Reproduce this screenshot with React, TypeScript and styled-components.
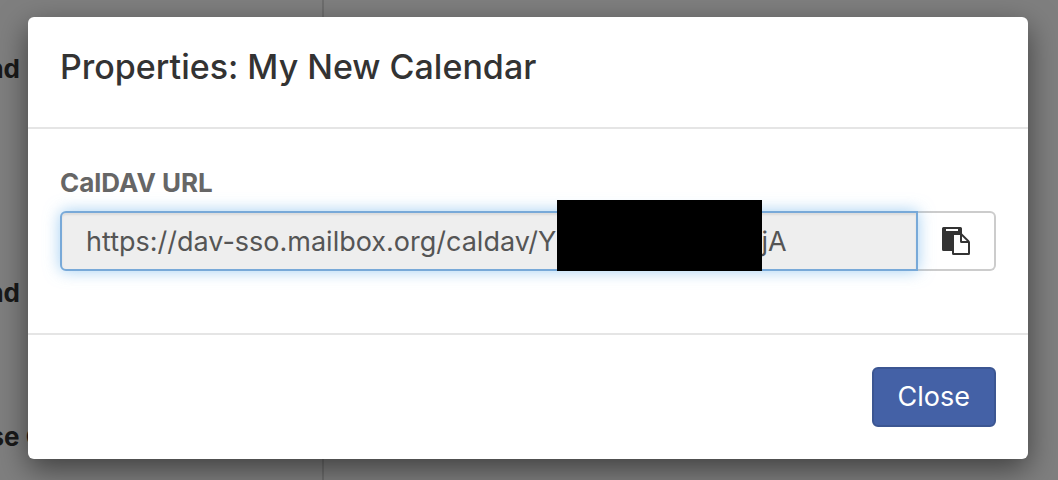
import React from "react";
import styled, { createGlobalStyle } from "styled-components";

const GlobalStyle = createGlobalStyle`
  *, *::before, *::after { box-sizing: border-box; }
  body {
    margin: 0;
    background: #ffffff;
    color: #333333;
    font-family: Inter, "Liberation Sans", sans-serif;
    font-size: 27px;
    line-height: 40px;
  }
`;

const Page = styled.div`
  position: relative;
  min-height: 100vh;
  overflow: hidden;
  display: flex;
`;

const Sidebar = styled.aside`
  width: 324px;
  border-right: 2px solid #dddddd;
  padding-top: 49px;
`;

const SidebarItem = styled.div<{ $width: number; $gap: number }>`
  display: flex;
  justify-content: flex-end;
  width: ${(p) => p.$width}px;
  margin-bottom: ${(p) => p.$gap}px;
  font-size: 26px;
  font-weight: 700;
  white-space: nowrap;
`;

const Backdrop = styled.div`
  position: absolute;
  inset: 0;
  padding: 17px 30px 21px 28px;
  background: rgba(0, 0, 0, 0.5);
`;

const Dialog = styled.section`
  background: #ffffff;
  border-radius: 6px;
  box-shadow: 0 10px 30px rgba(0, 0, 0, 0.5);
`;

const DialogHeader = styled.header`
  padding: 30px 32px 40px;
  border-bottom: 2px solid #e5e5e5;
`;

const Title = styled.h1`
  margin: 0;
  font-size: 34px;
  font-weight: 500;
  line-height: 40px;
`;

const DialogBody = styled.div`
  padding: 34px 32px 62px;
`;

const Label = styled.label`
  display: block;
  margin-bottom: 8px;
  color: #666666;
  font-size: 26px;
  font-weight: 700;
`;

const InputGroup = styled.div`
  display: flex;
  height: 60px;
`;

const InputWrap = styled.div`
  position: relative;
  z-index: 1;
  flex: 1;
`;

const UrlInput = styled.input`
  display: block;
  width: 100%;
  height: 100%;
  padding: 0 24px;
  border: 2px solid #78a9d8;
  border-radius: 6px 0 0 6px;
  outline: none;
  background: #eeeeee;
  box-shadow: inset 0 2px 2px rgba(0, 0, 0, 0.075), 0 0 16px rgba(102, 175, 233, 0.6);
  color: #555555;
  font: inherit;
`;

const Redaction = styled.span`
  position: absolute;
  top: -11px;
  bottom: 0;
  left: 497px;
  width: 205px;
  background: #000000;
`;

const CopyButton = styled.button`
  display: flex;
  align-items: center;
  justify-content: center;
  width: 78px;
  padding: 0;
  border: 2px solid #cccccc;
  border-left: 0;
  border-radius: 0 6px 6px 0;
  background: #ffffff;
  color: #333333;
`;

const DialogFooter = styled.footer`
  display: flex;
  justify-content: flex-end;
  padding: 32px;
  border-top: 2px solid #e5e5e5;
`;

const CloseButton = styled.button`
  height: 60px;
  padding: 0 24px;
  border: 2px solid #3c5692;
  border-radius: 6px;
  background: #4461a6;
  color: #ffffff;
  font: inherit;
`;

const PasteIcon = () => (
  <svg width="28" height="28" viewBox="0 0 28 28" aria-hidden="true">
    <path
      fill="currentColor"
      fillRule="evenodd"
      d="M1.5 0H18.5Q20 0 20 1.5V6.4L27.1 13.5Q28 14.5 28 15.5V26.5Q28 28 26.5 28H11.5Q10 28 10 26.5V24H1.5Q0 24 0 22.5V1.5Q0 0 1.5 0ZM4 2V4H16V2ZM12 8V26H26V16H19.5Q18 16 18 14.5V8ZM20 9.2V14H24.8Z"
    />
  </svg>
);

const calendarUrl = `https://dav-sso.mailbox.org/caldav/Y${"\u00a0".repeat(27)}jA`;

export default function App() {
  return (
    <>
      <GlobalStyle />
      <Page>
        <Sidebar>
          <SidebarItem $width={20} $gap={184}>nd</SidebarItem>
          <SidebarItem $width={20} $gap={104}>nd</SidebarItem>
          <SidebarItem $width={45} $gap={0}>se C</SidebarItem>
        </Sidebar>
        <Backdrop>
          <Dialog role="dialog" aria-modal="true" aria-labelledby="dialog-title">
            <DialogHeader>
              <Title id="dialog-title">Properties: My New Calendar</Title>
            </DialogHeader>
            <DialogBody>
              <Label htmlFor="caldav-url">CalDAV URL</Label>
              <InputGroup>
                <InputWrap>
                  <UrlInput id="caldav-url" type="text" readOnly value={calendarUrl} />
                  <Redaction />
                </InputWrap>
                <CopyButton type="button" aria-label="Copy to clipboard">
                  <PasteIcon />
                </CopyButton>
              </InputGroup>
            </DialogBody>
            <DialogFooter>
              <CloseButton type="button">Close</CloseButton>
            </DialogFooter>
          </Dialog>
        </Backdrop>
      </Page>
    </>
  );
}
